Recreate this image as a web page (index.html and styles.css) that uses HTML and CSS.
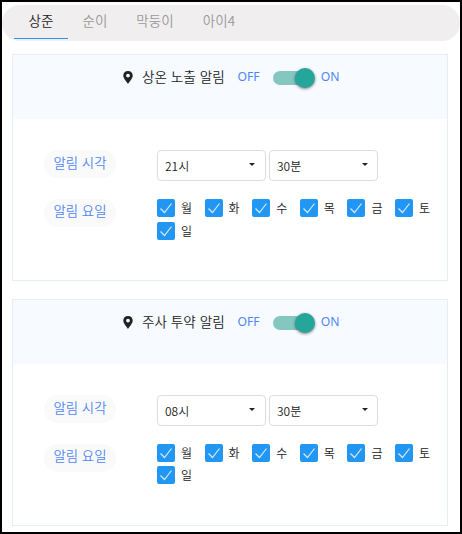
FILE: index.html
```html
<!DOCTYPE html>
<html lang="ko">
<head>
<meta charset="UTF-8">
<meta name="viewport" content="width=device-width, initial-scale=1.0">
<title>알림 설정</title>
<link rel="stylesheet" href="styles.css">
</head>
<body>

<div class="container">
    <nav class="tabs">
        <a class="tab active">상준</a>
        <a class="tab">순이</a>
        <a class="tab tab-wide">막둥이</a>
        <a class="tab tab-last">아이4</a>
    </nav>

    <section class="card">
        <div class="card-header">
            <svg class="pin" viewBox="0 0 10 13"><path fill-rule="evenodd" d="M5 0C2.1 0 .3 2 .3 4.6.3 7.7 3.5 10.5 5 13 6.5 10.5 9.7 7.7 9.7 4.6 9.7 2 7.9 0 5 0zM5 2.7a1.9 1.9 0 1 1 0 3.8 1.9 1.9 0 0 1 0-3.8z"/></svg>
            <span class="title">상온 노출 알림</span>
            <span class="state">OFF</span>
            <span class="switch"><span class="knob"></span></span>
            <span class="state">ON</span>
        </div>
        <div class="card-body">
            <div class="row">
                <span class="pill">알림 시각</span>
                <div class="selects">
                    <div class="select">21시<span class="caret"></span></div>
                    <div class="select">30분<span class="caret"></span></div>
                </div>
            </div>
            <div class="row row-days">
                <span class="pill">알림 요일</span>
                <div class="days">
                    <label class="day"><span class="box"><svg viewBox="0 0 18 18"><path d="M3.5 9.5L7.5 13.5L14.5 4.5"/></svg></span>월</label>
                    <label class="day"><span class="box"><svg viewBox="0 0 18 18"><path d="M3.5 9.5L7.5 13.5L14.5 4.5"/></svg></span>화</label>
                    <label class="day"><span class="box"><svg viewBox="0 0 18 18"><path d="M3.5 9.5L7.5 13.5L14.5 4.5"/></svg></span>수</label>
                    <label class="day"><span class="box"><svg viewBox="0 0 18 18"><path d="M3.5 9.5L7.5 13.5L14.5 4.5"/></svg></span>목</label>
                    <label class="day"><span class="box"><svg viewBox="0 0 18 18"><path d="M3.5 9.5L7.5 13.5L14.5 4.5"/></svg></span>금</label>
                    <label class="day"><span class="box"><svg viewBox="0 0 18 18"><path d="M3.5 9.5L7.5 13.5L14.5 4.5"/></svg></span>토</label>
                    <label class="day"><span class="box"><svg viewBox="0 0 18 18"><path d="M3.5 9.5L7.5 13.5L14.5 4.5"/></svg></span>일</label>
                </div>
            </div>
        </div>
    </section>

    <section class="card">
        <div class="card-header">
            <svg class="pin" viewBox="0 0 10 13"><path fill-rule="evenodd" d="M5 0C2.1 0 .3 2 .3 4.6.3 7.7 3.5 10.5 5 13 6.5 10.5 9.7 7.7 9.7 4.6 9.7 2 7.9 0 5 0zM5 2.7a1.9 1.9 0 1 1 0 3.8 1.9 1.9 0 0 1 0-3.8z"/></svg>
            <span class="title">주사 투약 알림</span>
            <span class="state">OFF</span>
            <span class="switch"><span class="knob"></span></span>
            <span class="state">ON</span>
        </div>
        <div class="card-body">
            <div class="row">
                <span class="pill">알림 시각</span>
                <div class="selects">
                    <div class="select">08시<span class="caret"></span></div>
                    <div class="select">30분<span class="caret"></span></div>
                </div>
            </div>
            <div class="row row-days">
                <span class="pill">알림 요일</span>
                <div class="days days-tight">
                    <label class="day"><span class="box"><svg viewBox="0 0 18 18"><path d="M3.5 9.5L7.5 13.5L14.5 4.5"/></svg></span>월</label>
                    <label class="day"><span class="box"><svg viewBox="0 0 18 18"><path d="M3.5 9.5L7.5 13.5L14.5 4.5"/></svg></span>화</label>
                    <label class="day"><span class="box"><svg viewBox="0 0 18 18"><path d="M3.5 9.5L7.5 13.5L14.5 4.5"/></svg></span>수</label>
                    <label class="day"><span class="box"><svg viewBox="0 0 18 18"><path d="M3.5 9.5L7.5 13.5L14.5 4.5"/></svg></span>목</label>
                    <label class="day"><span class="box"><svg viewBox="0 0 18 18"><path d="M3.5 9.5L7.5 13.5L14.5 4.5"/></svg></span>금</label>
                    <label class="day"><span class="box"><svg viewBox="0 0 18 18"><path d="M3.5 9.5L7.5 13.5L14.5 4.5"/></svg></span>토</label>
                    <label class="day"><span class="box"><svg viewBox="0 0 18 18"><path d="M3.5 9.5L7.5 13.5L14.5 4.5"/></svg></span>일</label>
                </div>
            </div>
        </div>
    </section>
</div>

</body>
</html>
```
FILE: styles.css
```css
* {
    box-sizing: border-box;
}
body {
    margin: 0;
    background: #fff;
    font-family: "Noto Sans CJK KR", sans-serif;
    font-weight: 350;
    color: #222;
}
.container {
    width: 462px;
    height: 534px;
    border: 2px solid #000;
    padding-top: 3px;
    overflow: hidden;
}
.tabs {
    display: flex;
    height: 36px;
    padding-left: 12px;
    border-radius: 18px;
    background: #f0eeee;
    margin-bottom: 13px;
}
.tab {
    width: 54px;
    height: 34px;
    line-height: 31px;
    text-align: center;
    font-size: 13.5px;
    color: #999;
}
.tab.active {
    color: #222;
    border-bottom: 1px solid #2196f3;
}
.tab-wide {
    width: 66px;
}
.tab-last {
    width: 62px;
}
.card {
    height: 227px;
    margin: 0 12px 18px 10px;
    border: 1px solid #e6edf9;
}
.card-header {
    display: flex;
    align-items: center;
    height: 64px;
    padding: 0 0 22px 110px;
    background: #f7fbff;
    white-space: nowrap;
}
.pin {
    width: 10px;
    height: 13px;
    margin-right: 9px;
    margin-top: 2px;
    fill: #222;
}
.title {
    width: 95.5px;
    font-size: 13.6px;
}
.state {
    font-family: "Noto Sans", sans-serif;
    font-weight: 400;
    font-size: 12.2px;
    color: #4f86f7;
}
.switch {
    display: flex;
    justify-content: flex-end;
    align-items: center;
    width: 41px;
    height: 14px;
    margin: 3px 7px 0 13px;
    border-radius: 7px;
    background: #84c7c1;
}
.knob {
    width: 20px;
    height: 20px;
    margin-right: -1px;
    border-radius: 50%;
    background: #26a69a;
    box-shadow: 0 1px 3px rgba(0, 0, 0, 0.5);
}
.card-body {
    padding: 31px 0 0 31px;
}
.row {
    display: flex;
    align-items: flex-start;
}
.pill {
    width: 72px;
    height: 28px;
    margin-right: 41px;
    border-radius: 14px;
    background: #fafafa;
    line-height: 25px;
    text-align: center;
    font-size: 13.4px;
    color: #4f86f7;
}
.selects {
    display: flex;
    gap: 3px;
}
.select {
    display: flex;
    justify-content: space-between;
    align-items: center;
    width: 109px;
    height: 31px;
    padding: 0 10px 1px 7px;
    border: 1px solid #ddd;
    border-radius: 4px;
    font-size: 12px;
}
.select + .select {
    padding-right: 9px;
}
.caret {
    border: 3px solid transparent;
    border-top-color: #222;
    border-bottom: 0;
    margin-top: -1px;
}
.row-days {
    margin-top: 18px;
}
.row-days .pill {
    line-height: 23px;
}
.days {
    display: flex;
    flex-wrap: wrap;
    row-gap: 5px;
    width: 286px;
}
.days-tight {
    row-gap: 4px;
}
.day {
    display: flex;
    align-items: center;
    width: 47.6px;
    height: 18px;
    line-height: 16px;
    font-size: 12px;
}
.box {
    width: 18px;
    height: 18px;
    margin-right: 6px;
    border-radius: 2px;
    background: #2196f3;
}
.box svg {
    display: block;
    fill: none;
    stroke: #d5eaff;
    stroke-width: 1.2;
}
```
